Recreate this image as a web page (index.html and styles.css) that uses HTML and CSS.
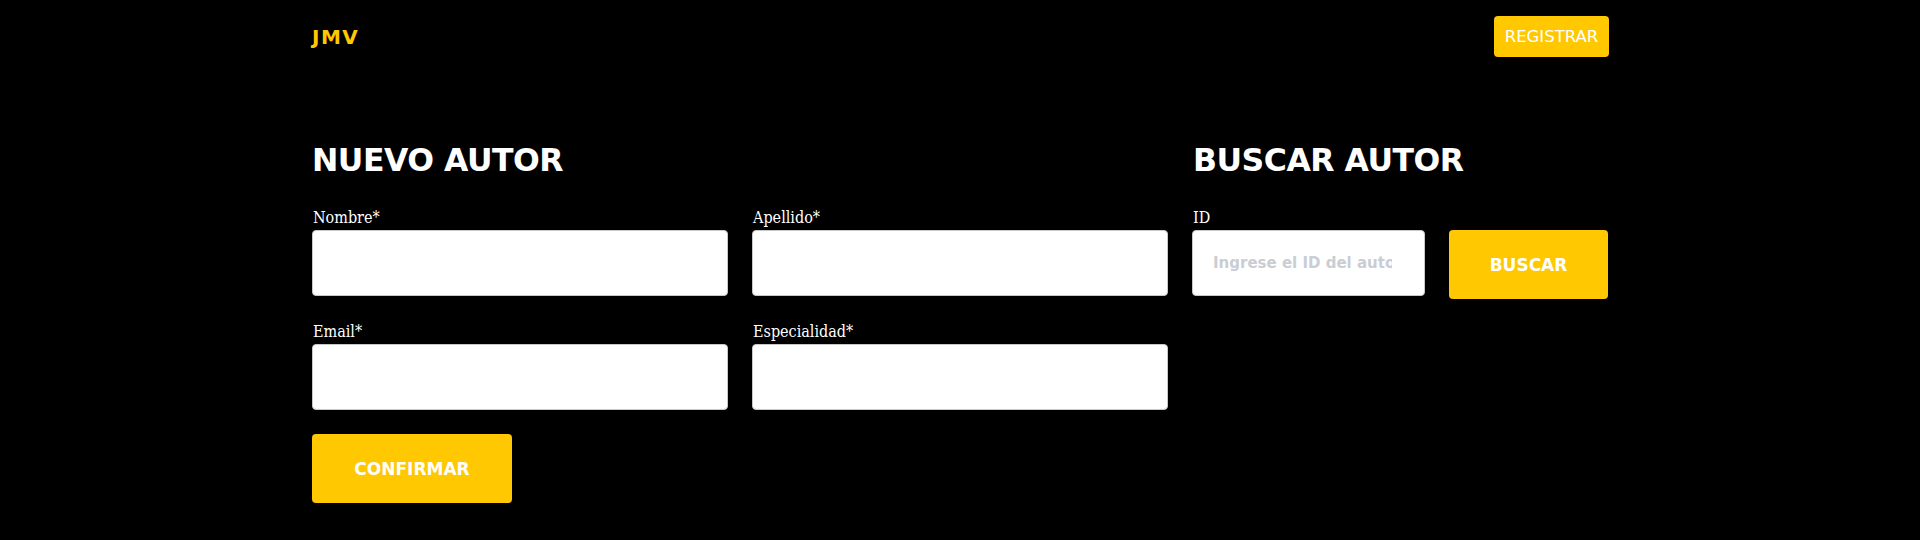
FILE: index.html
```html
<!DOCTYPE html>
<html lang="es">
<head>
<meta charset="utf-8">
<title>JMV - Autores</title>
<link rel="stylesheet" href="styles.css">
</head>
<body>
<div class="container">
  <header class="header">
    <span class="logo">JMV</span>
    <button class="btn-register" type="button">REGISTRAR</button>
  </header>
  <main class="grid">
    <section class="new-author">
      <h2 class="title">NUEVO AUTOR</h2>
      <form class="form">
        <div class="field">
          <label class="label">Nombre*</label>
          <input class="input" type="text">
        </div>
        <div class="field">
          <label class="label">Apellido*</label>
          <input class="input" type="text">
        </div>
        <div class="field">
          <label class="label">Email*</label>
          <input class="input" type="text">
        </div>
        <div class="field">
          <label class="label">Especialidad*</label>
          <input class="input" type="text">
        </div>
        <div class="actions">
          <button class="btn btn-confirm" type="button">CONFIRMAR</button>
        </div>
      </form>
    </section>
    <section class="search-author">
      <h2 class="title">BUSCAR AUTOR</h2>
      <div class="search-row">
        <div class="field">
          <label class="label">ID</label>
          <input class="input input-id" type="text" placeholder="Ingrese el ID del autor">
        </div>
        <button class="btn btn-search" type="button">BUSCAR</button>
      </div>
    </section>
  </main>
</div>
</body>
</html>
```

FILE: styles.css
```css
* { box-sizing: border-box; }
html, body { margin: 0; padding: 0; background: #000; }
body { font-family: "DejaVu Sans", sans-serif; color: #fff; }

.container {
  width: 1296px;
  margin: 0 auto;
}

.header {
  display: flex;
  justify-content: space-between;
  align-items: center;
  padding: 16px 0;
  height: 73px;
}

.logo {
  color: #ffc800;
  font-weight: bold;
  font-size: 20px;
  letter-spacing: 1.5px;
  padding-top: 1px;
}

.btn-register {
  background: #ffc800;
  color: #fff;
  border: none;
  border-radius: 4px;
  font-family: "DejaVu Sans", sans-serif;
  font-size: 16.5px;
  height: 41px;
  width: 115px;
  padding: 0;
  margin-right: -1px;
}

.grid {
  display: grid;
  grid-template-columns: 856px 416px;
  column-gap: 24px;
  padding-top: 69px;
}

.title {
  margin: 0;
  font-size: 31.5px;
  line-height: 36px;
  letter-spacing: -0.5px;
  font-weight: bold;
  color: #fff;
}

.form {
  margin-top: 30px;
  display: grid;
  grid-template-columns: 416px 416px;
  column-gap: 24px;
  row-gap: 26px;
}

.field {
  display: flex;
  flex-direction: column;
}

.label {
  font-family: "DejaVu Serif Condensed", "DejaVu Serif", serif;
  font-stretch: condensed;
  font-size: 16px;
  line-height: 20px;
  margin-bottom: 2px;
  margin-left: 1px;
  color: #fff;
}

.input {
  height: 66px;
  border: 1px solid #c8c8c8;
  border-radius: 4px;
  background: #fff;
  width: 100%;
  padding: 0 20px;
  font-family: "DejaVu Sans", sans-serif;
  font-size: 15px;
}

.actions {
  grid-column: 1 / span 2;
}

.btn {
  background: #ffc800;
  color: #fff;
  border: none;
  border-radius: 4px;
  font-family: "DejaVu Sans", sans-serif;
  font-weight: bold;
  font-size: 17px;
  height: 69px;
}

.btn-confirm {
  width: 200px;
  margin-top: -2px;
}

.search-author .title { margin-left: 1px; }

.search-row {
  margin-top: 30px;
  display: flex;
  align-items: flex-end;
  gap: 24px;
}

.input-id {
  width: 233px;
  padding: 0 32px 0 20px;
  font-weight: bold;
}

.input-id::placeholder {
  color: #c9cdd4;
  font-weight: bold;
}

.btn-search {
  width: 161px;
  margin-bottom: -3px;
}
```
